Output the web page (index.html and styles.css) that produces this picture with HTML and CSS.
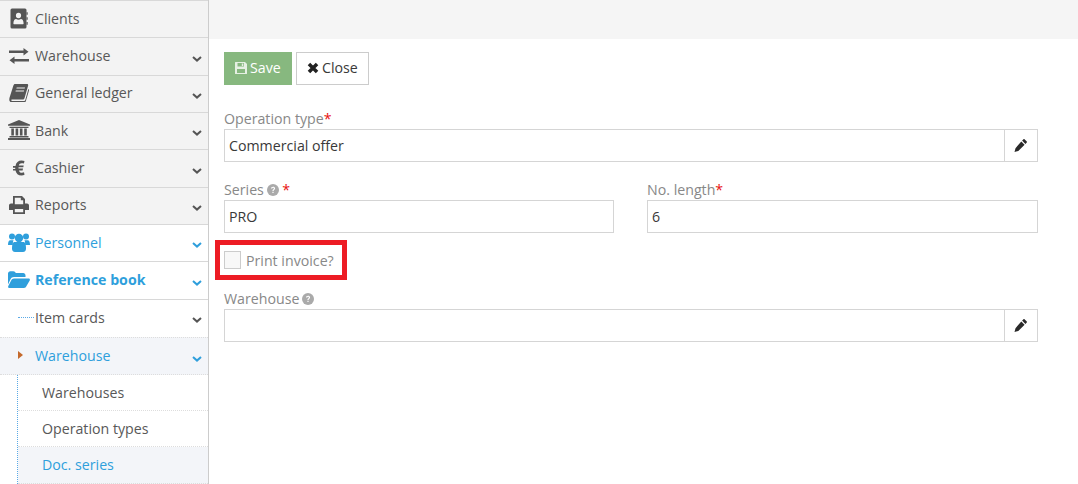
FILE: index.html
```html
<!DOCTYPE html>
<html lang="en">
<head>
<meta charset="utf-8">
<title>Document series</title>
<link rel="stylesheet" href="styles.css">
</head>
<body>
<div class="app">
  <nav class="sidebar">
    <a class="item">
      <span class="ico"><svg width="20" height="21" viewBox="0 0 20 20" preserveAspectRatio="none"><path fill="#555" fill-rule="evenodd" d="M3 .5h13a1.500 1.500 0 0 1 1.500 1.500V18a1.500 1.500 0 0 1-1.500 1.500H3A1.500 1.500 0 0 1 1.500 18V2A1.500 1.500 0 0 1 3 .5zM9.500 4.500a2.600 2.600 0 1 0 0 5.200 2.600 2.600 0 0 0 0-5.200zM5 15.500h9c.4 0 .6-.3.6-.7 0-2.300-1-4.300-2.700-4.300-.7.500-1.500.8-2.400.8s-1.700-.3-2.400-.8c-1.700 0-2.700 2-2.700 4.300 0 .4.200.7.600.7z"/><path fill="#555" d="M17.500 4h1.200v2.500h-1.200zM17.500 8.700h1.200v2.500h-1.200zM17.500 13.400h1.200v2.500h-1.200z"/></svg></span>
      <span class="label">Clients</span>
    </a>
    <a class="item">
      <span class="ico"><svg width="20" height="16" viewBox="0 0 20 16"><path fill="#555" d="M14.500 0l5 3.700-5 3.700V5H0V2.500h14.500zM5.500 8.600V11H20v2.500H5.500V16l-5-3.700z"/></svg></span>
      <span class="label">Warehouse</span><svg class="chev" width="10" height="6" viewBox="0 0 10 6"><path d="M1 1l4 3.600L9 1" fill="none" stroke="#555" stroke-width="2"/></svg>
    </a>
    <a class="item">
      <span class="ico"><svg width="20" height="19" viewBox="0 0 20 19"><path fill="#555" fill-rule="evenodd" d="M6 1h12c1 0 1.400.8 1.100 1.700l-3.600 12.600c-.3.900-.9 1.200-1.800 1.200H3c-.7 0-.9.400-.8.800.1.500.6.700 1.100.7h11.900c.5 0 .8-.2 1-.8l3.200-11.200.9.600-3.400 11.500c-.3 1-1 1.400-1.900 1.400H3c-1.400 0-2.700-1.200-2.700-2.700C.4 15 .6 14.200 1 13.300L4.400 2.500C4.700 1.600 5.200 1 6 1zm1.700 3.500l-.3 1h8.300l.3-1zm-.9 3l-.3 1h8.300l.3-1z"/></svg></span>
      <span class="label">General ledger</span><svg class="chev" width="10" height="6" viewBox="0 0 10 6"><path d="M1 1l4 3.600L9 1" fill="none" stroke="#555" stroke-width="2"/></svg>
    </a>
    <a class="item">
      <span class="ico"><svg width="22" height="20" viewBox="0 0 22 20"><path fill="#555" d="M11 0l11 4.500v1.300H0V4.500zM1.500 6.800h19V8h-19zM3.300 8.500h2.600v7H3.300zM7.600 8.500h2.600v7H7.600zM11.900 8.500h2.600v7h-2.600zM16.200 8.500h2.600v7h-2.600zM1.500 16h19v1.400h-19zM0 18h22v2H0z"/></svg></span>
      <span class="label">Bank</span><svg class="chev" width="10" height="6" viewBox="0 0 10 6"><path d="M1 1l4 3.600L9 1" fill="none" stroke="#555" stroke-width="2"/></svg>
    </a>
    <a class="item">
      <span class="ico"><svg width="12" height="16" viewBox="0 0 12 15"><path fill="#555" d="M8.500 0c1.200 0 2.300.3 3 .5l-.6 2.600c-.6-.2-1.400-.4-2.200-.4-1.500 0-2.500.9-2.900 2.300h4.900l-.4 1.800H5.500v1.300h4.500l-.4 1.800H5.900c.4 1.500 1.400 2.300 3 2.300.8 0 1.600-.2 2.100-.4l.5 2.500c-.7.300-1.800.6-3 .6-3.300 0-5.400-1.900-6-5H0V8.600h2.200V7.300H0V5.400h2.500C3.100 2 5.300 0 8.500 0z"/></svg></span>
      <span class="label">Cashier</span><svg class="chev" width="10" height="6" viewBox="0 0 10 6"><path d="M1 1l4 3.600L9 1" fill="none" stroke="#555" stroke-width="2"/></svg>
    </a>
    <a class="item">
      <span class="ico"><svg width="20" height="18" viewBox="0 0 20 18"><path fill="#555" fill-rule="evenodd" d="M4 0h9l3 3v4.500h2c1.100 0 2 .9 2 2V14h-4v4H4v-4H0V9.500c0-1.100.9-2 2-2h2zm1.800 1.800v6.500h8.400V4.200h-2.400V1.800zm0 11.200v3.200h8.400V13z"/></svg></span>
      <span class="label">Reports</span><svg class="chev" width="10" height="6" viewBox="0 0 10 6"><path d="M1 1l4 3.600L9 1" fill="none" stroke="#555" stroke-width="2"/></svg>
    </a>
    <a class="item open">
      <span class="ico"><svg width="22" height="20" viewBox="0 0 22 20"><g fill="#2f9fdc"><circle cx="4" cy="4.500" r="3"/><circle cx="18" cy="4.500" r="3"/><circle cx="11" cy="6" r="4.200"/><path d="M0 13c0-3 .8-4.800 2.400-4.800h3.200c-.6 1-.8 2.400-.7 4.800zM22 13c0-3-.8-4.800-2.400-4.800h-3.200c.6 1 .8 2.400.7 4.800z"/><path d="M6.500 10h9c1.500 0 2.500 2 2.500 6.500 0 2-1 3.500-3 3.500H7c-2 0-3-1.500-3-3.500C4 12 5 10 6.500 10z"/></g></svg></span>
      <span class="label">Personnel</span><svg class="chev" width="10" height="6" viewBox="0 0 10 6"><path d="M1 1l4 3.600L9 1" fill="none" stroke="#2f9fdc" stroke-width="2"/></svg>
    </a>
    <a class="item open strong">
      <span class="ico"><svg width="22" height="17" viewBox="0 0 22 17"><path fill="#2f9fdc" d="M0 2.500C0 1.200 1 .2 2.300.2h3c1.300 0 2 .7 2.400 1.800h7.500c1.300 0 2.300 1 2.300 2.300V6H6c-1.700 0-2.800.8-3.500 2.200L0 13.500zM6 7.500h14.500c1.200 0 1.700 1 1.200 2L18.500 15c-.5 1-1.300 2-2.500 2H1.500c-1.200 0-1.700-1-1.200-2l3-5.700C3.800 8.300 4.800 7.500 6 7.500z"/></svg></span>
      <span class="label">Reference book</span><svg class="chev" width="10" height="6" viewBox="0 0 10 6"><path d="M1 1l4 3.600L9 1" fill="none" stroke="#2f9fdc" stroke-width="2"/></svg>
    </a>
    <div class="submenu">
      <a class="sub tick"><span class="label">Item cards</span><svg class="chev" width="10" height="6" viewBox="0 0 10 6"><path d="M1 1l4 3.600L9 1" fill="none" stroke="#555" stroke-width="2"/></svg></a>
      <a class="sub active"><span class="caret"></span><span class="label">Warehouse</span><svg class="chev" width="10" height="6" viewBox="0 0 10 6"><path d="M1 1l4 3.600L9 1" fill="none" stroke="#2f9fdc" stroke-width="2"/></svg></a>
      <a class="leaf">Warehouses</a>
      <a class="leaf">Operation types</a>
      <a class="leaf current">Doc. series</a>
    </div>
  </nav>
  <div class="content">
    <header class="topbar"></header>
    <main class="page">
      <div class="actions">
        <button class="btn save"><svg width="14" height="14" viewBox="0 0 14 14"><path fill="#e6f0e3" fill-rule="evenodd" d="M1.500 1H11l2 2v9.500a.5.500 0 0 1-.5.500h-11a.5.500 0 0 1-.5-.500V1.500a.5.500 0 0 1 .5-.500zM3.500 2v3.500h6.500V2zM7.800 2.500h1.500v2.500H7.800zM3 8v4h8V8z"/></svg><span>Save</span></button>
        <button class="btn close"><svg width="12" height="12" viewBox="0 0 11 11"><path d="M1.800 1.800l7.400 7.400M9.200 1.800L1.800 9.200" stroke="#222" stroke-width="3.200"/></svg><span>Close</span></button>
      </div>
      <div class="field first">
        <label class="lbl">Operation type<span class="req">*</span></label>
        <div class="group"><div class="input">Commercial offer</div><span class="addon"><svg width="13" height="13" viewBox="0 0 13 13"><path fill="#2a2a2a" d="M9.300.4c.4-.4 1-.4 1.400 0l1.900 1.900c.4.400.4 1 0 1.400l-1.200 1.200-3.300-3.300zM7.300 2.400l3.300 3.300-6.300 6.300-3.800 1 1-3.800z"/></svg></span></div>
      </div>
      <div class="cols">
        <div class="field">
          <label class="lbl">Series <svg class="help" width="12" height="12" viewBox="0 0 12 12"><circle cx="6" cy="6" r="6" fill="#aaa"/><path d="M4 4.600c0-1.200.9-1.900 2.100-1.900 1.100 0 2 .7 2 1.700 0 1.400-1.500 1.400-1.500 2.500H5.400c0-1.700 1.500-1.700 1.500-2.500 0-.4-.4-.7-.8-.7-.5 0-.9.300-.9.900zM5.400 7.700h1.200v1.300H5.400z" fill="#fff"/></svg> <span class="req after-help">*</span></label>
          <div class="input">PRO</div>
        </div>
        <div class="field">
          <label class="lbl">No. length<span class="req">*</span></label>
          <div class="input">6</div>
        </div>
      </div>
      <div class="check">
        <span class="box"></span><span class="check-text">Print invoice?</span>
        <span class="highlight"></span>
      </div>
      <div class="field">
        <label class="lbl">Warehouse <svg class="help" width="12" height="12" viewBox="0 0 12 12"><circle cx="6" cy="6" r="6" fill="#aaa"/><path d="M4 4.600c0-1.200.9-1.900 2.100-1.900 1.100 0 2 .7 2 1.700 0 1.400-1.500 1.400-1.500 2.500H5.400c0-1.700 1.500-1.700 1.500-2.500 0-.4-.4-.7-.8-.7-.5 0-.9.300-.9.900zM5.400 7.700h1.200v1.300H5.400z" fill="#fff"/></svg></label>
        <div class="group"><div class="input"></div><span class="addon"><svg width="13" height="13" viewBox="0 0 13 13"><path fill="#2a2a2a" d="M9.300.4c.4-.4 1-.4 1.400 0l1.900 1.900c.4.400.4 1 0 1.400l-1.200 1.200-3.300-3.300zM7.300 2.400l3.300 3.300-6.300 6.300-3.800 1 1-3.800z"/></svg></span></div>
      </div>
    </main>
  </div>
</div>
</body>
</html>
```

FILE: styles.css
```css
* { box-sizing: border-box; }
html, body { margin: 0; height: 100%; overflow: hidden; background: #fff; }
body { font-family: "Open Sans", sans-serif; font-size: 14.2px; color: #393939; }
.app { display: flex; height: 484px; }

.sidebar { width: 209px; flex: none; border-right: 1px solid #ccc; background: #fff; }
.item { display: flex; align-items: center; height: 37.33px; border-top: 1px solid #d8d8d8; background: #f3f3f3; color: #585858; padding-bottom: 1.7px; }
.item.open { background: #fff; color: #2e9fdc; }
.item.strong .label { font-weight: 700; }
.ico { width: 35px; flex: none; display: flex; justify-content: center; padding-left: 2px; }
.label { flex: 1; white-space: nowrap; }
.chev { flex: none; margin: 6px 6px 0 0; }

.submenu { position: relative; }
.submenu::before { content: ""; position: absolute; left: 17px; top: 0; bottom: 0; border-left: 1px dotted #5aa9e6; }
.sub { display: flex; align-items: center; height: 38px; padding-left: 35px; background: #fff; color: #585858; border-top: 1px solid #d8d8d8; position: relative; }
.sub.tick { padding-bottom: 2px; }
.sub.tick::before { content: ""; position: absolute; left: 18px; top: 17px; width: 16px; border-top: 1px dotted #5aa9e6; }
.sub.active { background: #f3f5f9; color: #2e9fdc; border-top: 1px dotted #ddd; border-bottom: 1px dotted #ddd; }
.caret { position: absolute; left: 18px; top: 13px; border-left: 5px solid #c4692c; border-top: 4.500px solid transparent; border-bottom: 4.500px solid transparent; }
.leaf { display: flex; align-items: center; height: 36px; margin-left: 18px; padding: 1px 0 0 24px; color: #585858; border-bottom: 1px dotted #ddd; background: #fff; }
.leaf.current { background: #f3f5f9; color: #2e9fdc; height: 37px; padding-top: 0; padding-bottom: 1px; }

.content { flex: 1; min-width: 0; }
.topbar { height: 39px; background: #f5f5f5; }
.page { padding: 13px 40px 0 15px; }
.actions { display: flex; gap: 4px; }
.btn { display: flex; align-items: center; gap: 3px; height: 33px; padding: 0 10px 3px; font: inherit; border: 1px solid #ccc; background: #fff; color: #393939; }
.btn svg { margin-top: 2px; }
.btn.save { width: 68px; gap: 2px; border-color: #87b87f; background: #87b87f; color: #fff; padding: 0 9px 3px; }
.btn.close { width: 73px; }

.field { flex: 1; min-width: 0; }
.field.first { margin-top: 23px; }
.lbl { display: block; height: 21px; line-height: 22px; color: #888; white-space: nowrap; }
.req { color: #e81010; }
.req.after-help { margin-left: 0; }
.help { vertical-align: -1px; margin-left: -1px; }
.input { flex: 1; height: 33px; line-height: 31px; padding: 0 4px; border: 1px solid #d5d5d5; background: #fff; color: #393939; }
.group { display: flex; }
.addon { width: 33px; flex: none; height: 33px; display: flex; align-items: center; justify-content: center; padding-right: 2px; border: 1px solid #d5d5d5; border-left: 0; }
.cols { display: grid; grid-template-columns: 390px 391px; column-gap: 33px; margin-top: 17px; }

.check { position: relative; display: flex; align-items: center; gap: 5px; height: 18px; margin: 18px 0 19px; color: #888; }
.box { width: 17px; height: 18px; border: 1px solid #ccc; background: #f8f8f8; }
.highlight { position: absolute; left: -9px; top: -11px; width: 132px; height: 40px; border: 5px solid #ed1c24; }
```
